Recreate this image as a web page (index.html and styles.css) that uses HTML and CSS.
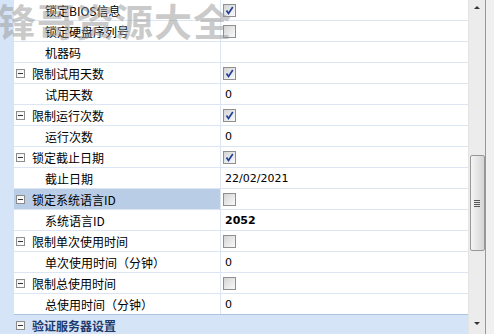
FILE: index.html
```html
<!DOCTYPE html>
<html lang="zh-CN">
  <head>
    <meta charset="UTF-8" />
    <title>授权设置</title>
    <link rel="stylesheet" href="styles.css">
  </head>
  <body>
    <div class="window">
      <div class="grid">
        <div class="row">
          <span class="gutter"></span>
          <div class="name child">锁定BIOS信息</div>
          <div class="value"><span class="check on"><svg viewBox="0 0 11 11"><path d="M2.5 5.5 L4.5 8.5 L8.8 2"/></svg></span></div>
        </div>
        <div class="row">
          <span class="gutter"></span>
          <div class="name child">锁定硬盘序列号</div>
          <div class="value"><span class="check"></span></div>
        </div>
        <div class="row">
          <span class="gutter"></span>
          <div class="name child">机器码</div>
          <div class="value"></div>
        </div>
        <div class="row">
          <span class="gutter"></span>
          <div class="name"><span class="toggle"></span>限制试用天数</div>
          <div class="value"><span class="check on"><svg viewBox="0 0 11 11"><path d="M2.5 5.5 L4.5 8.5 L8.8 2"/></svg></span></div>
        </div>
        <div class="row">
          <span class="gutter"></span>
          <div class="name child">试用天数</div>
          <div class="value text">0</div>
        </div>
        <div class="row">
          <span class="gutter"></span>
          <div class="name"><span class="toggle"></span>限制运行次数</div>
          <div class="value"><span class="check on"><svg viewBox="0 0 11 11"><path d="M2.5 5.5 L4.5 8.5 L8.8 2"/></svg></span></div>
        </div>
        <div class="row">
          <span class="gutter"></span>
          <div class="name child">运行次数</div>
          <div class="value text">0</div>
        </div>
        <div class="row">
          <span class="gutter"></span>
          <div class="name"><span class="toggle"></span>锁定截止日期</div>
          <div class="value"><span class="check on"><svg viewBox="0 0 11 11"><path d="M2.5 5.5 L4.5 8.5 L8.8 2"/></svg></span></div>
        </div>
        <div class="row">
          <span class="gutter"></span>
          <div class="name child">截止日期</div>
          <div class="value text">22/02/2021</div>
        </div>
        <div class="row selected">
          <span class="gutter"></span>
          <div class="name"><span class="toggle"></span>锁定系统语言ID</div>
          <div class="value"><span class="check"></span></div>
        </div>
        <div class="row">
          <span class="gutter"></span>
          <div class="name child">系统语言ID</div>
          <div class="value text bold">2052</div>
        </div>
        <div class="row">
          <span class="gutter"></span>
          <div class="name"><span class="toggle"></span>限制单次使用时间</div>
          <div class="value"><span class="check"></span></div>
        </div>
        <div class="row">
          <span class="gutter"></span>
          <div class="name child">单次使用时间（分钟）</div>
          <div class="value text">0</div>
        </div>
        <div class="row">
          <span class="gutter"></span>
          <div class="name"><span class="toggle"></span>限制总使用时间</div>
          <div class="value"><span class="check"></span></div>
        </div>
        <div class="row">
          <span class="gutter"></span>
          <div class="name child">总使用时间（分钟）</div>
          <div class="value text">0</div>
        </div>
        <div class="row category">
          <span class="gutter"></span>
          <div class="name"><span class="toggle"></span>验证服务器设置</div>
        </div>
      </div>

      <div class="scrollbar">
        <span class="arrow up"></span>
        <div class="thumb"><span class="grip"></span></div>
        <span class="arrow down"></span>
      </div>
      <div class="edge"></div>

      <div class="watermark">锋哥资源大全</div>
    </div>
  </body>
</html>
```

FILE: styles.css
```css
body {
  margin: 0;
  background-color: #f0f0f0;
  font-family: "Noto Sans CJK SC", "DejaVu Sans", sans-serif;
  font-size: 12px;
  color: #000;
}
.window {
  position: relative;
  display: flex;
  width: 494px;
  height: 334px;
  overflow: hidden;
}
.grid {
  width: 468px;
  background: white;
  display: flex;
  flex-direction: column;
}
.row {
  display: flex;
  height: 21px;
  flex-shrink: 0;
}
.gutter {
  width: 14px;
  background-color: #d5e4f7;
}
.name {
  width: 206px;
  display: flex;
  align-items: center;
  gap: 7px;
  padding-left: 2px;
  box-sizing: border-box;
  border-bottom: 1px solid #dce6f2;
  white-space: nowrap;
}
.name.child {
  padding-left: 31px;
}
.value {
  flex: 1;
  display: flex;
  align-items: center;
  padding-left: 2px;
  border-left: 1px solid #dce6f2;
  border-bottom: 1px solid #dce6f2;
}
.value.text {
  padding-left: 4px;
  font-family: "DejaVu Sans", sans-serif;
  font-size: 11px;
}
.value.bold {
  font-weight: bold;
}
.toggle {
  position: relative;
  width: 7px;
  height: 7px;
  border: 1px solid #8c8c8c;
  background: linear-gradient(135deg, #f0f0f0, #ffffff);
  flex-shrink: 0;
}
.toggle::after {
  content: "";
  position: absolute;
  left: 1px;
  top: 3px;
  width: 5px;
  height: 1px;
  background: #333;
}
.check {
  width: 11px;
  height: 11px;
  border: 1px solid #8f8f8f;
  background: linear-gradient(135deg, #d4d4d4, #fafafa);
  display: flex;
}
.check svg {
  width: 11px;
  height: 11px;
  fill: none;
  stroke: #22409a;
  stroke-width: 1.7;
}
.selected .name {
  background-color: #b9cde6;
}
.category .name {
  flex: 1;
  width: auto;
  background-color: #d5e4f7;
  border-top: 1px solid #aac3e3;
  border-bottom: none;
  color: #1e3a6d;
  font-weight: bold;
}
.category {
  height: 22px;
  margin-top: -1px;
}
.scrollbar {
  width: 16px;
  background-color: #ececec;
  display: flex;
  flex-direction: column;
  align-items: center;
  border-left: 1px solid #e4e4e4;
}
.arrow {
  width: 0;
  height: 0;
  border-left: 3px solid transparent;
  border-right: 3px solid transparent;
}
.arrow.up {
  margin-top: 6px;
  border-bottom: 3px solid #333;
}
.arrow.down {
  margin-top: auto;
  margin-bottom: 9px;
  border-top: 3px solid #333;
}
.thumb {
  margin-top: 146px;
  width: 13px;
  height: 94px;
  border: 1px solid #979797;
  border-radius: 2px;
  background: linear-gradient(90deg, #f4f4f4, #e2e2e2 60%, #d4d4d4);
  display: flex;
  align-items: center;
  justify-content: center;
}
.grip {
  width: 6px;
  height: 7px;
  background: repeating-linear-gradient(180deg, #555 0 1px, transparent 1px 2px);
}
.edge {
  width: 1px;
  background-color: #7c9ccc;
}
.watermark {
  position: absolute;
  left: -2px;
  top: -8px;
  font-size: 38px;
  font-weight: bold;
  letter-spacing: 1px;
  color: rgba(150, 150, 150, 0.5);
  pointer-events: none;
}
```
